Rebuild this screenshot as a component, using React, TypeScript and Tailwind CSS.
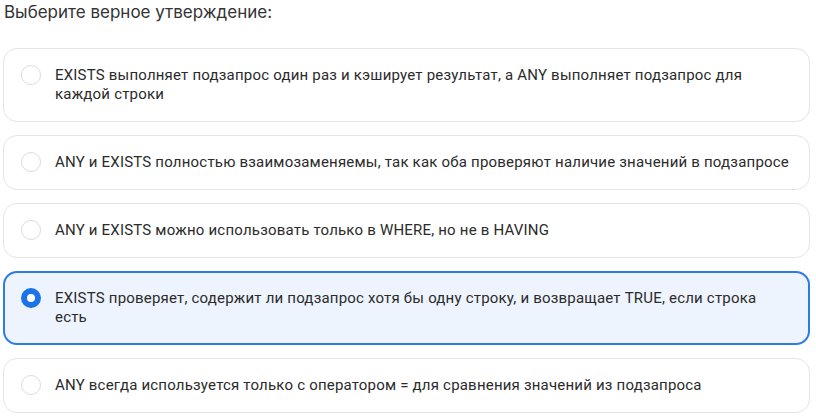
import { useState } from 'react'

const options = [
  'EXISTS выполняет подзапрос один раз и кэширует результат, а ANY выполняет подзапрос для каждой строки',
  'ANY и EXISTS полностью взаимозаменяемы, так как оба проверяют наличие значений в подзапросе',
  'ANY и EXISTS можно использовать только в WHERE, но не в HAVING',
  'EXISTS проверяет, содержит ли подзапрос хотя бы одну строку, и возвращает TRUE, если строка есть',
  'ANY всегда используется только с оператором = для сравнения значений из подзапроса',
]

export default function App() {
  const [selected, setSelected] = useState(3)

  return (
    <div className="bg-white min-h-screen px-[3px] text-[#333] font-['Inter',sans-serif]">
      <h2 className="text-[17px] leading-6 pl-[1px] text-[#333]">Выберите верное утверждение:</h2>
      <div className="mt-[24px] flex flex-col gap-[13px] w-[807px]">
        {options.map((text, i) => {
          const active = i === selected
          return (
            <button
              key={i}
              onClick={() => setSelected(i)}
              className={`flex items-start gap-[14px] text-left rounded-[14px] pr-4 ${
                active
                  ? 'border-2 border-[#2f7be6] bg-[#eef4fd] pl-[16px] py-[16px]'
                  : 'border border-[#e4e4e4] bg-white pl-[17px] py-[17px]'
              }`}
            >
              <span
                className={`shrink-0 w-5 h-5 -my-px rounded-full ${
                  active ? 'border-[6px] border-[#1a73e8] bg-white' : 'border border-[#dcdcdc] bg-white'
                }`}
              />
              <span className="text-[15px] leading-[19px] tracking-[0.2px] text-[#2b2b2b] font-['Roboto',sans-serif]">
                {text}
              </span>
            </button>
          )
        })}
      </div>
    </div>
  )
}
